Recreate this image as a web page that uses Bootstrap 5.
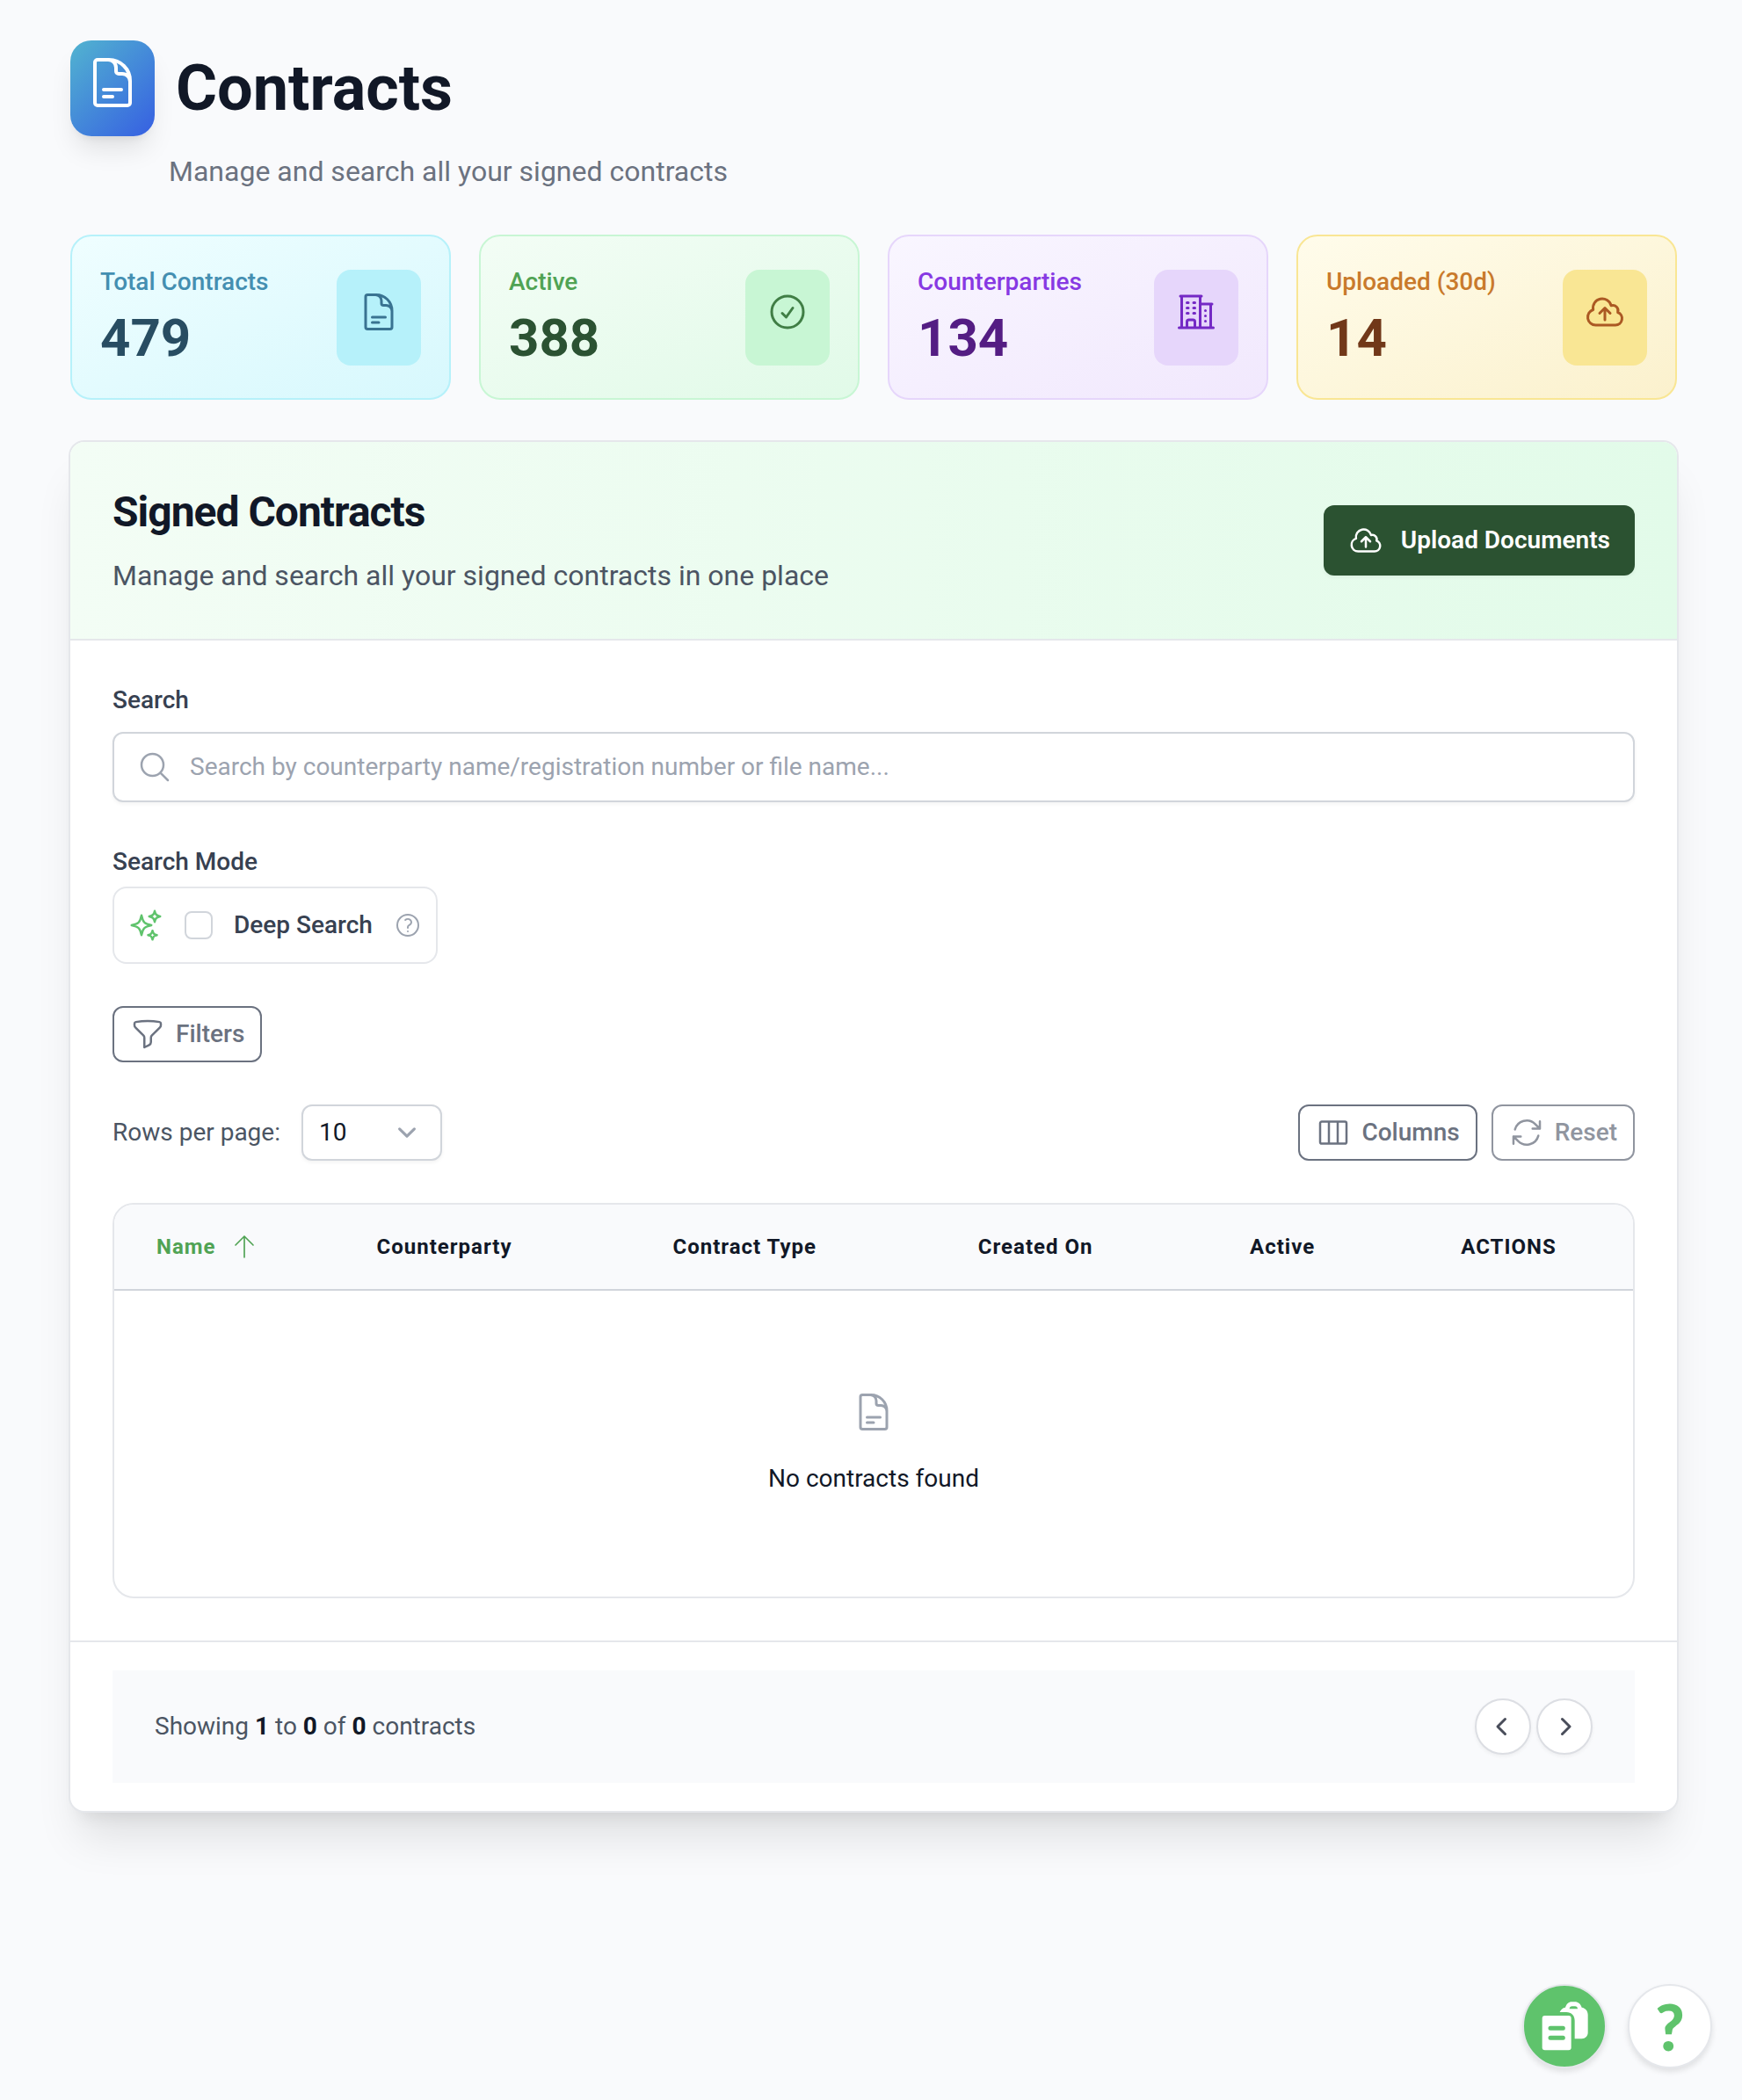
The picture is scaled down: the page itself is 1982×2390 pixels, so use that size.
<!DOCTYPE html>
<html lang="en">
<head>
<meta charset="utf-8">
<meta name="viewport" content="width=device-width, initial-scale=1">
<title>Contracts</title>
<link href="https://cdn.jsdelivr.net/npm/bootstrap@5.3.0/dist/css/bootstrap.min.css" rel="stylesheet">
<script src="https://cdn.jsdelivr.net/npm/bootstrap@5.3.0/dist/js/bootstrap.bundle.min.js" defer></script>
<style>
  :root {
    --ink: #111827;
    --ink-soft: #374151;
    --ink-muted: #4b5563;
    --gray: #6b7280;
    --gray-light: #9ca3af;
    --line: #e5e7eb;
    --line-strong: #d1d5db;
    --surface: #f9fafc;
    --brand: #5fc36c;
  }
  body {
    font-family: Roboto, "Liberation Sans", sans-serif;
    font-size: 28px;
    line-height: 40px;
    color: var(--ink);
    background: var(--surface);
  }
  svg { display: block; flex: none; }
  .ico { fill: none; stroke: currentColor; stroke-width: 1.5; stroke-linecap: round; stroke-linejoin: round; }
  .ico-32 { width: 32px; height: 32px; }
  .ico-40 { width: 40px; height: 40px; }
  .ico-48 { width: 48px; height: 48px; }
  .ico-64 { width: 64px; height: 64px; }
  .ico-brand { color: var(--brand); }
  .ico-muted { color: var(--gray-light); }

  .page { padding: 46px 74px 96px 80px; }

  /* Page heading */
  .page-tile {
    padding: 16px 16px 29px;
    border-radius: 24px;
    color: #fff;
    background: linear-gradient(135deg, #52b4d0, #365fe2);
    box-shadow: 0 20px 30px -6px rgba(0,0,0,.1), 0 8px 12px -8px rgba(0,0,0,.1);
  }
  .page-title { font-size: 72px; line-height: 72px; font-weight: 700; }
  .page-sub { font-size: 32px; line-height: 48px; color: var(--gray); margin: 16px 0 48px 112px; }

  /* Figures */
  .stats { --bs-gutter-x: 32px; --bs-gutter-y: 32px; margin-bottom: 48px; }
  .stat {
    padding: 32px;
    border: 2px solid var(--edge);
    border-radius: 24px;
    background: linear-gradient(to bottom right, var(--from), var(--to));
  }
  .stat-name { font-weight: 500; color: var(--label); }
  .stat-value { font-size: 60px; line-height: 72px; font-weight: 700; color: var(--value); margin-top: 8px; }
  .stat-tile { padding: 24px 24px 37px; border-radius: 16px; background: var(--edge); color: var(--icon); }
  .stat-cyan { --from: #effeff; --to: #d7f8fd; --edge: #b6f1fa; --label: #448fb1; --value: #284d62; --icon: #397391; }
  .stat-green { --from: #f3fdf5; --to: #e1fae8; --edge: #c8f6d4; --label: #50a354; --value: #2b5232; --icon: #407e45; }
  .stat-violet { --from: #f9f6ff; --to: #f1e8fd; --edge: #e6d6fb; --label: #8739e3; --value: #541d83; --icon: #7429c5; }
  .stat-amber { --from: #fffceb; --to: #fbf1cd; --edge: #f9e694; --label: #c97a2c; --value: #713819; --icon: #ab5923; }

  /* Main panel */
  .panel {
    background: #fff;
    border-radius: 16px;
    box-shadow: 0 0 0 2px var(--line), 0 40px 50px -10px rgba(0,0,0,.1), 0 16px 20px -12px rgba(0,0,0,.1);
  }
  .panel-top {
    padding: 48px;
    border-bottom: 2px solid var(--line);
    border-radius: 16px 16px 0 0;
    background: linear-gradient(to right, #f3fdf5, #e2fbe9);
  }
  .panel-title { font-size: 48px; line-height: 64px; font-weight: 700; letter-spacing: -1px; margin: 0 0 16px; }
  .panel-sub { font-size: 32px; line-height: 48px; color: var(--ink-muted); }
  .panel-main { padding: 48px; }
  .panel-end { padding: 32px 48px; border-top: 2px solid var(--line); }

  .btn-upload {
    height: 80px;
    padding: 0 28px;
    gap: 20px;
    border: 0;
    border-radius: 12px;
    font-size: 28px;
    line-height: 40px;
    font-weight: 600;
    color: #fff;
    background: #2b5231;
    box-shadow: 0 2px 4px rgba(0,0,0,.05);
  }
  .btn-upload:hover { color: #fff; background: #234428; }

  .field-label { font-weight: 500; color: var(--ink-soft); }
  .search-box { margin: 16px 0 48px; }
  .search-icon { position: absolute; left: 28px; top: 20px; color: var(--gray-light); pointer-events: none; }
  .search-input {
    height: 80px;
    padding: 0 24px 2px 86px;
    font-size: 28px;
    line-height: 40px;
    border: 2px solid var(--line-strong);
    border-radius: 12px;
    box-shadow: 0 2px 4px rgba(0,0,0,.05);
  }
  .search-input::placeholder { color: var(--gray-light); }

  .deep {
    height: 88px;
    gap: 24px;
    padding: 0 16px;
    margin: 8px 0 48px;
    border: 2px solid var(--line);
    border-radius: 16px;
  }
  .deep .form-check-input { width: 32px; height: 32px; margin: 0; border: 2px solid var(--line-strong); border-radius: 8px; }

  .btn-line {
    height: 64px;
    padding: 0 18px;
    gap: 12px;
    font-size: 28px;
    line-height: 40px;
    font-weight: 500;
    color: var(--gray);
    border: 2px solid var(--gray);
    border-radius: 12px;
    background: #fff;
  }
  .btn-line:disabled { color: var(--gray); border-color: var(--gray); background: #fff; opacity: .75; }

  .toolbar { margin: 48px 0; }
  .rows-label { color: var(--ink-muted); }
  .rows-select {
    width: 160px;
    height: 64px;
    padding: 0 64px 0 18px;
    font-size: 28px;
    line-height: 40px;
    color: var(--ink);
    border: 2px solid var(--line-strong);
    border-radius: 12px;
    background-image: url("data:image/svg+xml,%3Csvg xmlns='http://www.w3.org/2000/svg' fill='none' viewBox='0 0 20 20'%3E%3Cpath stroke='%239ca3af' stroke-linecap='round' stroke-linejoin='round' stroke-width='1.5' d='M6 8l4 4 4-4'/%3E%3C/svg%3E");
    background-position: right 17px center;
    background-size: 42px 42px;
    box-shadow: 0 2px 4px rgba(0,0,0,.05);
  }

  /* Table */
  .grid-frame { border: 2px solid var(--line); border-radius: 24px; overflow: hidden; }
  .grid { width: 100%; table-layout: fixed; border-collapse: collapse; }
  .grid thead tr { background: var(--surface); border-bottom: 2px solid var(--line-strong); }
  .grid th { height: 97px; padding: 0 0 0 48px; font-size: 24px; line-height: 32px; font-weight: 700; letter-spacing: 1px; white-space: nowrap; }
  .sort { gap: 16px; padding: 0; border: 0; background: none; color: #50a354; font-weight: 700; letter-spacing: 1px; }
  .sort .ico { stroke-width: 1.25; }
  .grid .empty { padding: 114px 48px; }
  .empty .ico { color: var(--gray-light); margin: 0 auto 32px; }

  .pager { min-height: 128px; padding: 32px 48px; background: var(--surface); color: var(--ink-muted); }
  .pager b { color: var(--ink); font-weight: 700; }
  .pager-steps { gap: 6px; }
  .step {
    width: 64px;
    height: 64px;
    border: 2px solid #dcdee3;
    border-radius: 50%;
    color: #494d5a;
    background: #fff;
    box-shadow: 0 2px 4px rgba(0,0,0,.05);
  }
  .step .ico { stroke-width: 3; }

  /* Floating help */
  .float-tools { right: 34px; bottom: 36px; gap: 24px; }
  .float-btn { width: 96px; height: 96px; border: 2px solid var(--line); border-radius: 50%; background: #fff; color: var(--brand); box-shadow: 0 4px 6px rgba(0,0,0,.1); }
  .float-docs { background: var(--brand); }
  .float-help { font-family: Lato, sans-serif; font-size: 72px; line-height: 72px; font-weight: 900; }
</style>
</head>
<body>

<svg class="d-none" aria-hidden="true">
  <symbol id="i-doc" viewBox="0 0 24 24"><path d="M19.5 14.25v-2.625a3.375 3.375 0 0 0-3.375-3.375h-1.5A1.125 1.125 0 0 1 13.5 7.125v-1.5a3.375 3.375 0 0 0-3.375-3.375H8.25m0 12.75h7.5m-7.5 3H12M10.5 2.25H5.625c-.621 0-1.125.504-1.125 1.125v17.25c0 .621.504 1.125 1.125 1.125h12.75c.621 0 1.125-.504 1.125-1.125V11.25a9 9 0 0 0-9-9Z"/></symbol>
  <symbol id="i-cloud" viewBox="0 0 24 24"><path d="M12 16.5V9.75m0 0 3 3m-3-3-3 3M6.75 19.5a4.5 4.5 0 0 1-1.41-8.775 5.25 5.25 0 0 1 10.233-2.33 3 3 0 0 1 3.758 3.848A3.752 3.752 0 0 1 18 19.5H6.75Z"/></symbol>
</svg>

<main class="page min-vh-100">
  <header>
    <div class="d-flex align-items-center gap-4">
      <div class="page-tile"><svg class="ico ico-64"><use href="#i-doc"/></svg></div>
      <h1 class="page-title mb-0">Contracts</h1>
    </div>
    <p class="page-sub">Manage and search all your signed contracts</p>
  </header>

  <section class="row row-cols-1 row-cols-md-2 row-cols-xl-4 stats mt-0">
    <div class="col mt-0">
      <div class="stat stat-cyan d-flex align-items-center justify-content-between">
        <div><div class="stat-name">Total Contracts</div><div class="stat-value">479</div></div>
        <div class="stat-tile"><svg class="ico ico-48"><use href="#i-doc"/></svg></div>
      </div>
    </div>
    <div class="col mt-0">
      <div class="stat stat-green d-flex align-items-center justify-content-between">
        <div><div class="stat-name">Active</div><div class="stat-value">388</div></div>
        <div class="stat-tile"><svg class="ico ico-48" viewBox="0 0 24 24"><path d="M9 12.75 11.25 15 15 9.75M21 12a9 9 0 1 1-18 0 9 9 0 0 1 18 0Z"/></svg></div>
      </div>
    </div>
    <div class="col mt-0">
      <div class="stat stat-violet d-flex align-items-center justify-content-between">
        <div><div class="stat-name">Counterparties</div><div class="stat-value">134</div></div>
        <div class="stat-tile"><svg class="ico ico-48" viewBox="0 0 24 24"><path d="M2.25 21h19.5m-18-18v18m10.5-18v18m6-13.5V21M6.75 6.75h.75m-.75 3h.75m-.75 3h.75m3-6h.75m-.75 3h.75m-.75 3h.75M6.75 21v-3.375c0-.621.504-1.125 1.125-1.125h2.25c.621 0 1.125.504 1.125 1.125V21M3 3h12m-.75 4.5H21m-3.75 3.75h.008v.008h-.008v-.008Zm0 3h.008v.008h-.008v-.008Zm0 3h.008v.008h-.008v-.008Z"/></svg></div>
      </div>
    </div>
    <div class="col mt-0">
      <div class="stat stat-amber d-flex align-items-center justify-content-between">
        <div><div class="stat-name">Uploaded (30d)</div><div class="stat-value">14</div></div>
        <div class="stat-tile"><svg class="ico ico-48"><use href="#i-cloud"/></svg></div>
      </div>
    </div>
  </section>

  <section class="panel">
    <div class="panel-top d-flex align-items-center justify-content-between">
      <div>
        <h2 class="panel-title">Signed Contracts</h2>
        <p class="panel-sub mb-0">Manage and search all your signed contracts in one place</p>
      </div>
      <button type="button" class="btn btn-upload d-flex align-items-center"><svg class="ico ico-40"><use href="#i-cloud"/></svg>Upload Documents</button>
    </div>

    <div class="panel-main">
      <label class="field-label d-block" for="search">Search</label>
      <div class="search-box position-relative">
        <svg class="ico ico-40 search-icon" viewBox="0 0 24 24"><path d="m21 21-5.197-5.197m0 0A7.5 7.5 0 1 0 5.196 5.196a7.5 7.5 0 0 0 10.607 10.607Z"/></svg>
        <input id="search" type="text" class="form-control search-input" placeholder="Search by counterparty name/registration number or file name...">
      </div>

      <div class="field-label">Search Mode</div>
      <div class="d-flex">
        <div class="deep d-flex align-items-center">
          <svg class="ico ico-40 ico-brand" viewBox="0 0 24 24"><path d="M9.813 15.904 9 18.75l-.813-2.846a4.5 4.5 0 0 0-3.09-3.09L2.25 12l2.846-.813a4.5 4.5 0 0 0 3.09-3.09L9 5.25l.813 2.846a4.5 4.5 0 0 0 3.09 3.09L15.75 12l-2.846.813a4.5 4.5 0 0 0-3.09 3.09ZM18.259 8.715 18 9.75l-.259-1.035a3.375 3.375 0 0 0-2.455-2.456L14.25 6l1.036-.259a3.375 3.375 0 0 0 2.455-2.456L18 2.25l.259 1.035a3.375 3.375 0 0 0 2.456 2.456L21.75 6l-1.035.259a3.375 3.375 0 0 0-2.456 2.456ZM16.894 20.567 16.5 21.75l-.394-1.183a2.25 2.25 0 0 0-1.423-1.423L13.5 18.75l1.183-.394a2.25 2.25 0 0 0 1.423-1.423l.394-1.183.394 1.183a2.25 2.25 0 0 0 1.423 1.423l1.183.394-1.183.394a2.25 2.25 0 0 0-1.423 1.423Z"/></svg>
          <input id="deep" type="checkbox" class="form-check-input">
          <label class="field-label" for="deep">Deep Search</label>
          <svg class="ico ico-32 ico-muted" viewBox="0 0 24 24"><path d="M9.879 7.519c1.171-1.025 3.071-1.025 4.242 0 1.172 1.025 1.172 2.687 0 3.712-.203.179-.43.326-.67.442-.745.361-1.45.999-1.45 1.827v.75M21 12a9 9 0 1 1-18 0 9 9 0 0 1 18 0Zm-9 5.25h.008v.008H12v-.008Z"/></svg>
        </div>
      </div>

      <button type="button" class="btn btn-line d-flex align-items-center"><svg class="ico ico-40" viewBox="0 0 24 24"><path d="M12 3c2.755 0 5.455.232 8.083.678.533.09.917.556.917 1.096v1.044a2.25 2.25 0 0 1-.659 1.591l-5.432 5.432a2.25 2.25 0 0 0-.659 1.591v2.927a2.25 2.25 0 0 1-1.244 2.013L9.75 21v-6.568a2.25 2.25 0 0 0-.659-1.591L3.659 7.409A2.25 2.25 0 0 1 3 5.818V4.774c0-.54.384-1.006.917-1.096A48.32 48.32 0 0 1 12 3Z"/></svg>Filters</button>

      <div class="toolbar d-flex align-items-center justify-content-between">
        <div class="d-flex align-items-center gap-4">
          <label class="rows-label" for="rows">Rows per page:</label>
          <select id="rows" class="form-select rows-select"><option>10</option><option>20</option><option>50</option></select>
        </div>
        <div class="d-flex gap-3">
          <button type="button" class="btn btn-line d-flex align-items-center"><svg class="ico ico-40" viewBox="0 0 24 24"><path d="M9 4.5v15m6-15v15m-10.875 0h15.75c.621 0 1.125-.504 1.125-1.125V5.625c0-.621-.504-1.125-1.125-1.125H4.125C3.504 4.5 3 5.004 3 5.625v12.75c0 .621.504 1.125 1.125 1.125Z"/></svg>Columns</button>
          <button type="button" class="btn btn-line d-flex align-items-center" disabled><svg class="ico ico-40" viewBox="0 0 24 24"><path d="M16.023 9.348h4.992v-.001M2.985 19.644v-4.992m0 0h4.992m-4.993 0 3.181 3.183a8.25 8.25 0 0 0 13.803-3.7M4.031 9.865a8.25 8.25 0 0 1 13.803-3.7l3.181 3.182m0-4.991v4.99"/></svg>Reset</button>
        </div>
      </div>

      <div class="grid-frame">
        <table class="grid">
          <colgroup><col style="width:14.5%"><col style="width:19.5%"><col style="width:20.1%"><col style="width:17.9%"><col style="width:13.9%"><col></colgroup>
          <thead>
            <tr>
              <th scope="col"><button type="button" class="sort d-flex align-items-center">Name<svg class="ico ico-32" viewBox="0 0 24 24"><path d="M4.5 10.5 12 3m0 0 7.5 7.5M12 3v18"/></svg></button></th>
              <th scope="col">Counterparty</th>
              <th scope="col">Contract Type</th>
              <th scope="col">Created On</th>
              <th scope="col">Active</th>
              <th scope="col">ACTIONS</th>
            </tr>
          </thead>
          <tbody>
            <tr><td class="empty text-center" colspan="6"><svg class="ico ico-48"><use href="#i-doc"/></svg>No contracts found</td></tr>
          </tbody>
        </table>
      </div>
    </div>

    <div class="panel-end">
      <div class="pager d-flex align-items-center justify-content-between">
        <div>Showing <b>1</b> to <b>0</b> of <b>0</b> contracts</div>
        <div class="pager-steps d-flex">
          <button type="button" class="step d-flex align-items-center justify-content-center p-0" aria-label="Previous"><svg class="ico ico-32" viewBox="0 0 32 32"><path d="M18.500 7.500 10 16l8.500 8.500"/></svg></button>
          <button type="button" class="step d-flex align-items-center justify-content-center p-0" aria-label="Next"><svg class="ico ico-32" viewBox="0 0 32 32"><path d="M13.500 7.500 22 16l-8.500 8.500"/></svg></button>
        </div>
      </div>
    </div>
  </section>
</main>

<div class="float-tools position-fixed d-flex">
  <button type="button" class="float-btn float-docs d-flex align-items-center justify-content-center p-0" aria-label="Documents">
    <svg width="53" height="56" viewBox="0 0 159 168"><path fill="#fff" fill-rule="evenodd" d="M62 36C66 27 72 21 81 20 85 8 92 1 103 1h10c12 0 20 7 24 19 12 2 21 11 21 25v61c0 12-9 21-21 21h-24V65c0-17-11-29-29-29ZM95 25h28c0-6-4-9-9-9h-10c-5 0-9 3-9 9Z"/><rect x="2" y="48" width="99" height="118" rx="9" fill="#fff"/><path d="M30 91h43M30 124h43" stroke="#5fc36c" stroke-width="15" stroke-linecap="round"/></svg>
  </button>
  <button type="button" class="float-btn float-help d-flex align-items-center justify-content-center p-0" aria-label="Help">?</button>
</div>
</body>
</html>
